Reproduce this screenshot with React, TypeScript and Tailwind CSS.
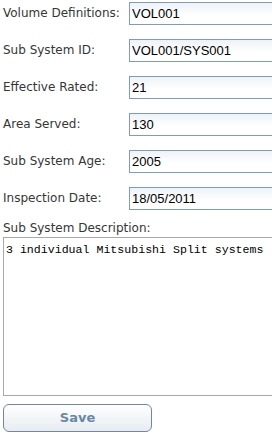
const fields = [
  { label: 'Volume Definitions:', value: 'VOL001' },
  { label: 'Sub System ID:', value: 'VOL001/SYS001' },
  { label: 'Effective Rated:', value: '21' },
  { label: 'Area Served:', value: '130' },
  { label: 'Sub System Age:', value: '2005' },
  { label: 'Inspection Date:', value: '18/05/2011' },
];

function FieldRow({ label, value }: { label: string; value: string }) {
  return (
    <div className="flex flex-row items-center h-[23px]">
      <label className="w-[126px] shrink-0 text-[12px] leading-[23px] text-[#363636] font-['DejaVu_Sans',Verdana,sans-serif] whitespace-nowrap">
        {label}
      </label>
      <input
        readOnly
        value={value}
        className="w-[160px] shrink-0 h-[23px] border border-[#7f9db9] bg-gradient-to-b from-[#eef2f7] to-white to-60% pl-[2px] text-[13px] text-black font-['Liberation_Sans',Arial,sans-serif] outline-none"
      />
    </div>
  );
}

export default function App() {
  return (
    <div className="w-[272px] h-[439px] overflow-hidden bg-white">
      <div className="flex flex-col pl-[3px] pt-[2px]">
        <div className="flex flex-col gap-[14px]">
          {fields.map((f) => (
            <FieldRow key={f.label} label={f.label} value={f.value} />
          ))}
        </div>
        <div className="mt-[10px] h-[16px] text-[12px] leading-[16px] text-[#363636] font-['DejaVu_Sans',Verdana,sans-serif] whitespace-nowrap">
          Sub System Description:
        </div>
        <textarea
          readOnly
          value="3 individual Mitsubishi Split systems"
          className="mt-[1px] w-[285px] h-[159px] shrink-0 resize-none border border-[#a9a9a9] px-[2px] py-[5px] text-[11.6px] leading-[14px] text-black font-['Liberation_Mono','Courier_New',monospace] outline-none"
        />
        <button className="mt-[8px] w-[149px] h-[28px] rounded-[6px] border border-[#72879b] bg-gradient-to-b from-white to-[#e6ecf1] text-[13px] font-bold text-[#6a87a3] font-['DejaVu_Sans',Verdana,sans-serif]">
          Save
        </button>
      </div>
    </div>
  );
}
